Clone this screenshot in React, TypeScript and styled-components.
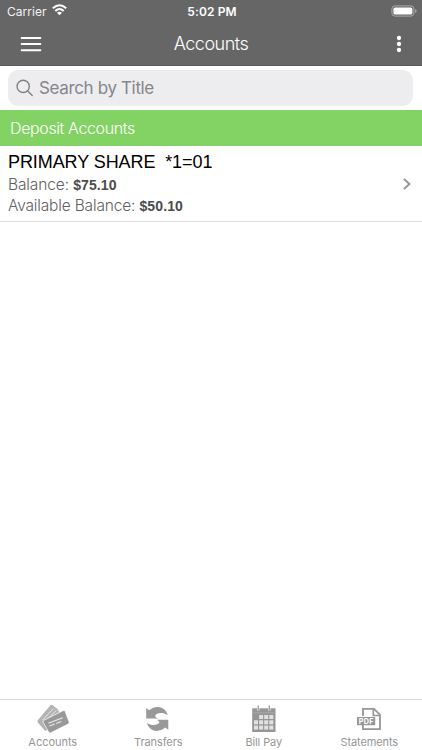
import React from "react";
import styled, { createGlobalStyle } from "styled-components";

const Global = createGlobalStyle`
  * { box-sizing: border-box; }
  body { margin: 0; background: #fff; font-family: Inter, sans-serif; }
  svg { display: block; flex: none; }
`;

const Screen = styled.div`
  display: flex;
  flex-direction: column;
  width: 422px;
  height: 750px;
  background: #fff;
  overflow: hidden;
`;

const Header = styled.header`
  height: 66px;
  flex: none;
  background: #666;
  border-bottom: 1px solid #5a5a5a;
  color: #fff;
`;

const StatusBar = styled.div`
  display: grid;
  grid-template-columns: 1fr auto 1fr;
  align-items: center;
  height: 22px;
  padding: 0 5px 0 7px;
`;

const Carrier = styled.div`
  display: flex;
  align-items: center;
  gap: 5px;
  color: #f2f2f2;
  svg { margin-bottom: 2px; }
`;

const Battery = styled.div`
  display: flex;
  justify-content: flex-end;
  padding-bottom: 1px;
`;

const NavBar = styled.div`
  display: grid;
  grid-template-columns: 1fr auto 1fr;
  align-items: center;
  height: 43px;
  padding: 0 20px;
`;

const NavEnd = styled.div`
  display: flex;
  justify-content: flex-end;
`;

const Label = styled.span<{ $size: number; $tracking?: number; $weight?: number; $family?: string }>`
  font-family: ${(p) => p.$family ?? "Inter"}, "Liberation Sans", sans-serif;
  font-size: ${(p) => p.$size}px;
  font-weight: ${(p) => p.$weight ?? 400};
  letter-spacing: ${(p) => p.$tracking ?? 0}px;
  white-space: pre;
`;

const SearchArea = styled.div`
  flex: none;
  height: 44px;
  padding: 4px 9px 4px 8px;
`;

const SearchField = styled.div`
  display: flex;
  align-items: center;
  gap: 5px;
  height: 36px;
  padding-left: 8px;
  border-radius: 10px;
  background: #ededef;
  color: #85858a;
`;

const SectionTitle = styled.div`
  display: flex;
  align-items: center;
  flex: none;
  height: 36px;
  padding: 0 10px;
  background: #83d264;
  color: #fff;
`;

const AccountRow = styled.div`
  display: flex;
  align-items: center;
  justify-content: space-between;
  flex: none;
  height: 76px;
  padding: 0 10px 0 8px;
  border-bottom: 1px solid #dedede;
`;

const AccountText = styled.div`
  display: flex;
  flex-direction: column;
  padding-bottom: 1px;
`;

const AccountName = styled.div`
  height: 24px;
  line-height: 24px;
  color: #000;
`;

const AmountLine = styled.div`
  height: 21px;
  line-height: 21px;
  color: #606060;
  strong { color: #4c4c4c; }
`;

const Content = styled.main`
  flex: 1;
`;

const TabBar = styled.nav`
  display: grid;
  grid-template-columns: repeat(4, 1fr);
  flex: none;
  height: 51px;
  border-top: 1px solid #dcdcdc;
  color: #969696;
`;

const Tab = styled.div`
  display: flex;
  flex-direction: column;
  align-items: center;
  padding-top: 3px;
`;

const TabLabel = styled.div`
  display: flex;
  height: 14px;
  line-height: 14px;
`;

const CardsIcon = () => (
  <svg width="34" height="32" viewBox="0 0 34 32">
    <path d="M1.8 17.2 14.2 2.4q1-1.2 2.2-.3L21.6 6 27 17 9.3 28 1.8 19.5q-.8-1.1 0-2.3Z" fill="#b3b3b3" />
    <path d="m6.5 17 11-11.5M8 19.5 20.5 7.3" stroke="#e9e9e9" strokeWidth="1" />
    <path d="m8 17.2 18.8-9.4q1.7-.7 2.4.8l3.9 10.3q.6 1.5-1 2.2L14.8 29.8q-1.5.7-2.2-.9L7.2 19.2q-.6-1.4.8-2Z" fill="#999" stroke="#fff" strokeWidth=".7" />
    <path d="m12.3 20.3 14.5-5.6M13.5 23l5.2-2m1.5-.6 5.2-2" stroke="#e9e9e9" strokeWidth="1.1" />
  </svg>
);

const TransferIcon = () => (
  <svg width="34" height="32" viewBox="0 0 34 32" fill="#999">
    <path d="M5.2 5 8.2 7.3C14.5 1.6 24.2 3 26.8 12 22.2 9.2 17.5 9.5 15 11.4 13.4 12.6 14.2 14 16.8 15.4H5.2Z" />
    <path d="M27.3 26.7 24.2 24.6C17.8 30.1 8.6 28.8 5.9 20 10.4 22.7 15 22.5 17.5 20.6 19.1 19.4 18.3 18.2 15.7 16.8H27.3Z" />
  </svg>
);

const CalendarIcon = () => (
  <svg width="34" height="32" viewBox="0 0 34 32">
    <path d="M5.2 5.3H28.5V29H5.2Z" fill="#969696" />
    <path d="M11.2 2.5v5M22.3 2.5v5" stroke="#fff" strokeWidth="2.4" />
    <path d="M11.2 2.5v5M22.3 2.5v5" stroke="#969696" strokeWidth="1.3" />
    <path d="M5.2 9.7h23.3" stroke="#aeaeae" strokeWidth=".7" />
    <g fill="#e1e1e1">
      {[0, 1, 2].map((row) =>
        [0, 1, 2, 3].map((col) =>
          row === 0 && col === 0 ? null : (
            <rect key={`${row}-${col}`} x={7 + col * 5.1} y={12 + row * 5.3} width="4" height="4" />
          ),
        ),
      )}
    </g>
  </svg>
);

const PdfIcon = () => (
  <svg width="34" height="32" viewBox="0 0 34 32">
    <path d="M11 13V5.9H22l6 6V26.2H11V22" fill="none" stroke="#969696" strokeWidth="1.8" />
    <path d="M21.3 6v6.5h6.5" fill="none" stroke="#969696" strokeWidth="1.7" />
    <path d="M5 14h18.2v8.2H5Z" fill="#969696" />
    <text x="14.2" y="20.8" textAnchor="middle" fill="#fff" fontFamily="Inter, sans-serif" fontSize="7.2" fontWeight="700" letterSpacing=".3">PDF</text>
  </svg>
);

const tabs = [
  { name: "Accounts", icon: <CardsIcon />, tracking: -0.03 },
  { name: "Transfers", icon: <TransferIcon />, tracking: -0.1 },
  { name: "Bill Pay", icon: <CalendarIcon />, tracking: -0.1 },
  { name: "Statements", icon: <PdfIcon />, tracking: -0.1 },
];

export default function App() {
  return (
    <>
      <Global />
      <Screen>
        <Header>
          <StatusBar>
            <Carrier>
              <Label $size={12} $tracking={0.05}>Carrier</Label>
              <svg width="15" height="12" viewBox="0 0 15 12" fill="none" stroke="#fff" strokeWidth="2">
                <path d="M.8 4.3Q7.5-1.8 14.2 4.3M3.3 7Q7.5 3 11.7 7" />
                <path d="M5 8.7Q7.5 6.7 10 8.7L7.5 11.3Z" fill="#fff" stroke="none" />
              </svg>
            </Carrier>
            <Label $size={12} $weight={600} $tracking={0.1}>5:02 PM</Label>
            <Battery>
              <svg width="26" height="12" viewBox="0 0 26 12">
                <rect x=".9" y=".9" width="22" height="10.2" rx="3" fill="none" stroke="#aaa" />
                <rect x="2.4" y="2.4" width="19" height="7.2" rx="1.7" fill="#fff" />
                <path d="M24.2 4v4q1.4-.6 1.4-2t-1.4-2" fill="#aaa" />
              </svg>
            </Battery>
          </StatusBar>
          <NavBar>
            <svg width="22" height="16" viewBox="0 0 22 16" stroke="#fff" strokeWidth="2" strokeLinecap="round">
              <path d="M1.7 2h18.6M1.7 8h18.6M1.7 14.2h18.6" />
            </svg>
            <Label $size={18} $weight={300} $tracking={-0.5}>Accounts</Label>
            <NavEnd>
              <svg width="6" height="18" viewBox="0 0 6 18" fill="#fff">
                <circle cx="3" cy="3" r="2.15" /><circle cx="3" cy="9" r="2.15" /><circle cx="3" cy="15" r="2.15" />
              </svg>
            </NavEnd>
          </NavBar>
        </Header>
        <SearchArea>
          <SearchField>
            <svg width="18" height="18" viewBox="0 0 18 18" fill="none" stroke="#808085" strokeWidth="1.4" strokeLinecap="round">
              <circle cx="7.2" cy="7.4" r="6.1" /><path d="m11.7 12 4.5 4.4" />
            </svg>
            <Label $size={17} $tracking={-0.36}>Search by Title</Label>
          </SearchField>
        </SearchArea>
        <SectionTitle>
          <Label $size={16} $weight={300} $tracking={-0.38}>Deposit Accounts</Label>
        </SectionTitle>
        <AccountRow>
          <AccountText>
            <AccountName><Label $size={18} $tracking={-0.08} $family="Liberation Sans">PRIMARY SHARE  *1=01</Label></AccountName>
            <AmountLine><Label $size={15.5} $weight={300} $tracking={-0.12}>Balance: </Label><Label as="strong" $size={14} $weight={700} $tracking={0.12} $family="Liberation Sans">$75.10</Label></AmountLine>
            <AmountLine><Label $size={15.5} $weight={300} $tracking={-0.17}>Available Balance: </Label><Label as="strong" $size={14} $weight={700} $tracking={0.12} $family="Liberation Sans">$50.10</Label></AmountLine>
          </AccountText>
          <svg width="10" height="14" viewBox="0 0 10 14" fill="none" stroke="#989898" strokeWidth="2">
            <path d="m2 2 5.4 5L2 12" />
          </svg>
        </AccountRow>
        <Content />
        <TabBar>
          {tabs.map((tab) => (
            <Tab key={tab.name}>
              {tab.icon}
              <TabLabel><Label $size={11} $tracking={tab.tracking}>{tab.name}</Label></TabLabel>
            </Tab>
          ))}
        </TabBar>
      </Screen>
    </>
  );
}
